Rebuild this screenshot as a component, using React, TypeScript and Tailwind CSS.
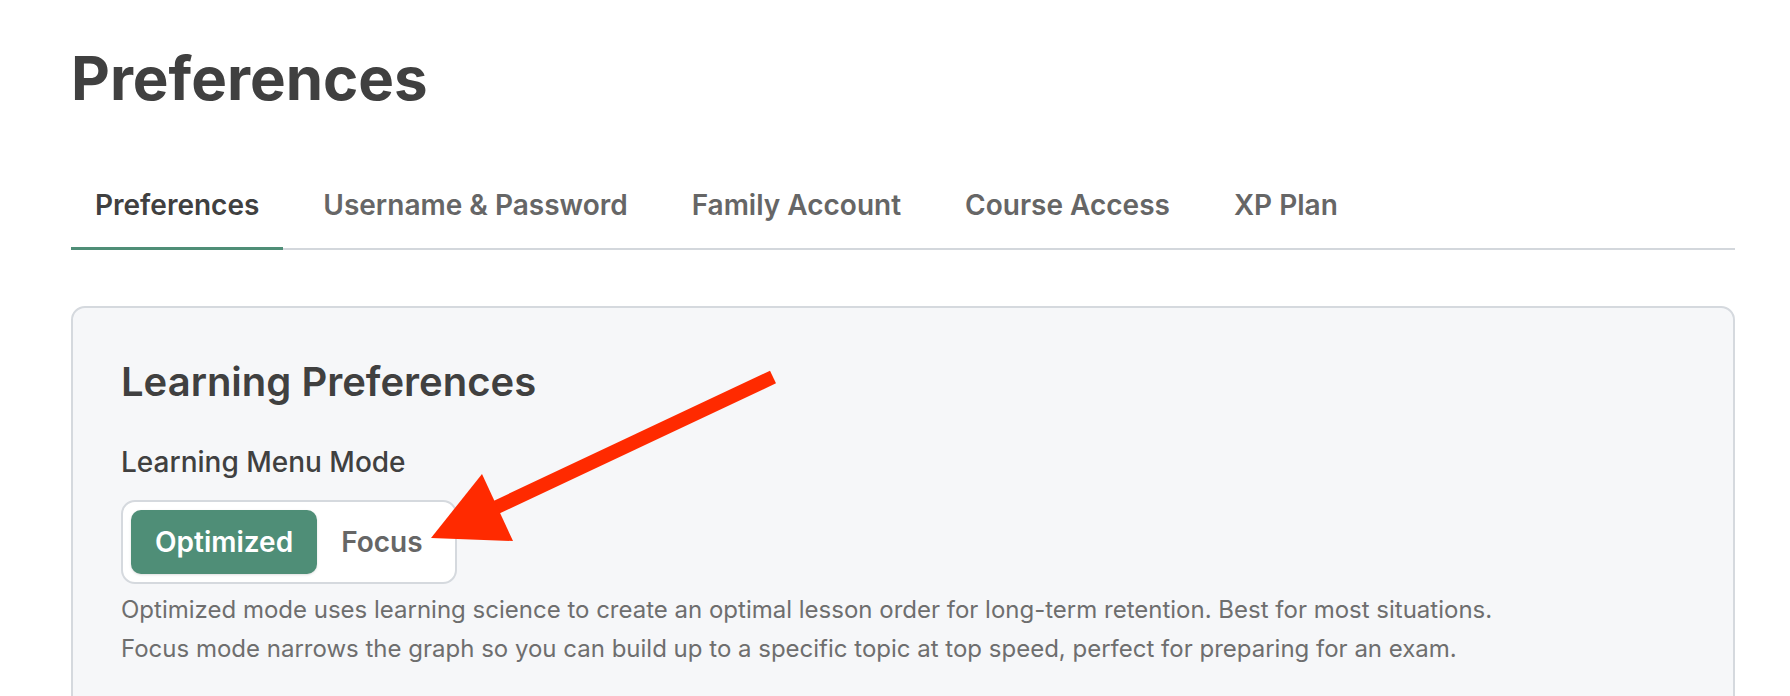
import React from "react";

const tabs = ["Preferences", "Username & Password", "Family Account", "Course Access", "XP Plan"];

export default function App() {
  return (
    <div
      className="relative w-[1790px] h-[696px] overflow-hidden bg-white"
      style={{ fontFamily: "Inter, 'Noto Sans', sans-serif" }}
    >
      <div className="ml-[71px] w-[1664px] pt-[48px]">
        <h1 className="text-[60px] leading-none font-bold text-[#404040]">Preferences</h1>

        <div className="mt-[83px] flex gap-4 border-b-2 border-[#d3d7dc]">
          {tabs.map((t, i) => (
            <div
              key={t}
              className={
                "-mb-[2px] px-6 pb-7 text-[28px] leading-7 font-semibold border-b-[3px] " +
                (i === 0 ? "border-[#4f8e77] text-[#404040]" : "border-transparent text-[#666666]")
              }
            >
              {t}
            </div>
          ))}
        </div>

        <div className="mt-14 h-[500px] rounded-[14px] border-2 border-[#d5d9de] bg-[#f6f7f9] pl-[48px] pt-[54px]">
          <h2 className="text-[40px] leading-none font-semibold text-[#404040]">Learning Preferences</h2>
          <div className="mt-[46px] text-[28px] leading-none font-medium text-[#404040]">Learning Menu Mode</div>
          <div className="mt-6 inline-flex rounded-[14px] border-2 border-[#d5d9de] bg-white p-2">
            <div className="rounded-[10px] bg-[#4f8e77] px-6 py-[18px] text-[28px] leading-7 font-semibold text-white shadow-sm">
              Optimized
            </div>
            <div className="px-6 py-[18px] text-[28px] leading-7 font-semibold text-[#666666]">Focus</div>
          </div>
          <div className="mt-[6px] text-[24px] leading-[39px] text-[#6e6e6e]">
            <p>Optimized mode uses learning science to create an optimal lesson order for long-term retention. Best for most situations.</p>
            <p>Focus mode narrows the graph so you can build up to a specific topic at top speed, perfect for preparing for an exam.</p>
          </div>
        </div>
      </div>

      <svg
        className="pointer-events-none absolute left-0 top-0"
        width="1790"
        height="696"
        viewBox="0 0 1790 696"
      >
        <line x1="773" y1="377" x2="480" y2="515" stroke="#ff2a00" strokeWidth="14" />
        <polygon points="431,538 482,474 513,541" fill="#ff2a00" />
      </svg>
    </div>
  );
}
